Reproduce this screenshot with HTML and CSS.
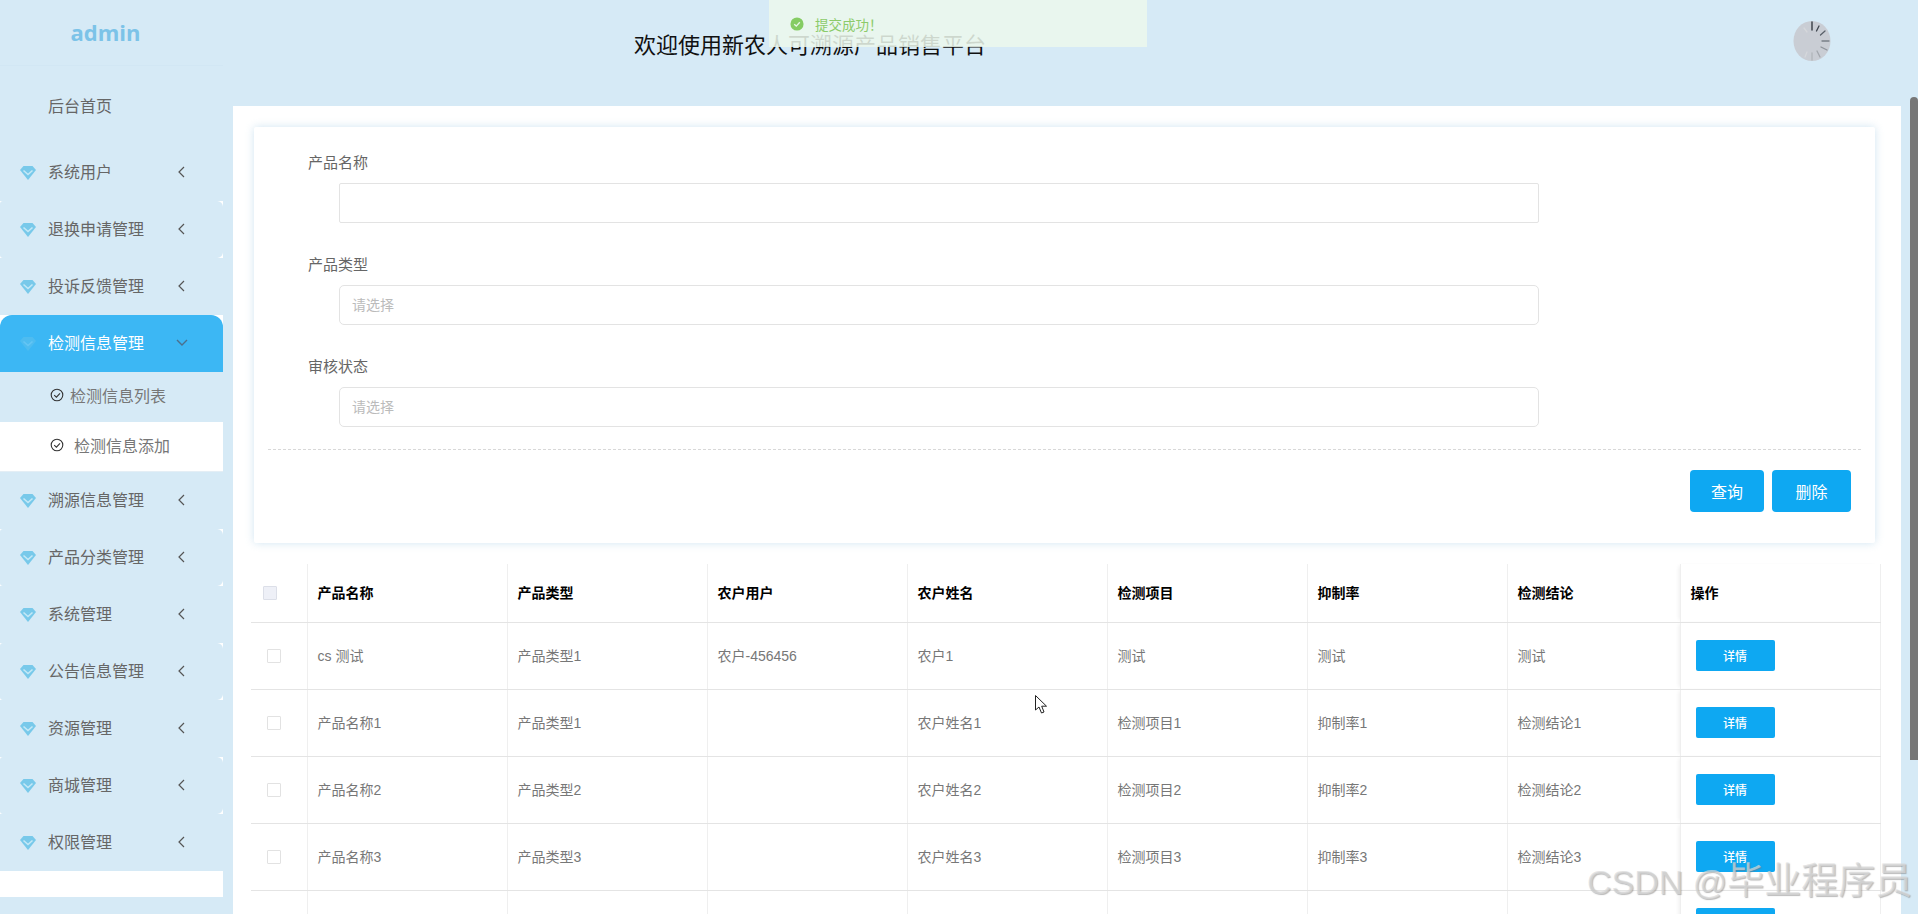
FILE: index.html
```html
<!DOCTYPE html>
<html lang="zh-CN">
<head>
    <meta charset="UTF-8">
    <title>新农人可溯源产品销售平台</title>
    <link rel="stylesheet" href="styles.css">
</head>
<body>
    <svg class="svg-defs" width="0" height="0">
        <symbol id="gem" viewBox="0 0 16 14">
            <polygon points="3.5,0 12.5,0 16,4 8,14 0,4" fill="#78c9ea"/>
            <polyline points="3.5,4.5 8,8.5 12.5,4.5" fill="none" stroke="#c4e8f6" stroke-width="1.6"/>
        </symbol>
        <symbol id="chev" viewBox="0 0 7 12">
            <polyline points="6,1 1,6 6,11" fill="none" stroke="currentColor" stroke-width="1.2"/>
        </symbol>
        <symbol id="check" viewBox="0 0 14 14">
            <circle cx="7" cy="7" r="5.8" fill="none" stroke="currentColor" stroke-width="1.1"/>
            <polyline points="4.2,7.2 6.4,9.2 10,5.4" fill="none" stroke="currentColor" stroke-width="1.1"/>
        </symbol>
    </svg>

    <div class="page">
        <aside class="sidebar">
            <div class="logo">admin</div>
            <div class="home-link">后台首页</div>
            <ul class="menu">
                <li class="menu-item"><svg class="gem"><use href="#gem"/></svg><span>系统用户</span><svg class="chev"><use href="#chev"/></svg></li>
                <li class="menu-item notched"><svg class="gem"><use href="#gem"/></svg><span>退换申请管理</span><svg class="chev"><use href="#chev"/></svg></li>
                <li class="menu-item"><svg class="gem"><use href="#gem"/></svg><span>投诉反馈管理</span><svg class="chev"><use href="#chev"/></svg></li>
                <li class="menu-item active"><svg class="gem"><use href="#gem"/></svg><span>检测信息管理</span>
                    <svg class="chev-down" viewBox="0 0 12 7"><polyline points="1,1 6,6 11,1" fill="none" stroke="currentColor" stroke-width="1.4"/></svg></li>
                <li class="sub-item"><svg class="check"><use href="#check"/></svg><span>检测信息列表</span></li>
                <li class="sub-item current"><svg class="check"><use href="#check"/></svg><span>检测信息添加</span></li>
                <li class="menu-item"><svg class="gem"><use href="#gem"/></svg><span>溯源信息管理</span><svg class="chev"><use href="#chev"/></svg></li>
                <li class="menu-item notched"><svg class="gem"><use href="#gem"/></svg><span>产品分类管理</span><svg class="chev"><use href="#chev"/></svg></li>
                <li class="menu-item"><svg class="gem"><use href="#gem"/></svg><span>系统管理</span><svg class="chev"><use href="#chev"/></svg></li>
                <li class="menu-item notched"><svg class="gem"><use href="#gem"/></svg><span>公告信息管理</span><svg class="chev"><use href="#chev"/></svg></li>
                <li class="menu-item"><svg class="gem"><use href="#gem"/></svg><span>资源管理</span><svg class="chev"><use href="#chev"/></svg></li>
                <li class="menu-item notched"><svg class="gem"><use href="#gem"/></svg><span>商城管理</span><svg class="chev"><use href="#chev"/></svg></li>
                <li class="menu-item"><svg class="gem"><use href="#gem"/></svg><span>权限管理</span><svg class="chev"><use href="#chev"/></svg></li>
            </ul>
        </aside>

        <div class="main">
            <header class="topbar">
                <h1 class="site-title">欢迎使用新农人可溯源产品销售平台</h1>
                <svg class="avatar" viewBox="0 0 38 40">
                    <ellipse cx="19" cy="20" rx="18.5" ry="20" fill="#c9cdd4"/>
                    <g stroke-width="1.3" stroke-linecap="round">
                        <line x1="19" y1="1" x2="19" y2="9" stroke="#2b3038"/>
                        <line x1="26" y1="5" x2="23.5" y2="10" stroke="#3f454e"/>
                        <line x1="32" y1="10" x2="27.5" y2="14" stroke="#596069"/>
                        <line x1="36" y1="20" x2="29" y2="20" stroke="#7a8088"/>
                        <line x1="34" y1="29" x2="28" y2="26" stroke="#8e939a"/>
                        <line x1="27" y1="36" x2="24" y2="30" stroke="#a3a7ad"/>
                        <line x1="19" y1="39" x2="19" y2="32" stroke="#b1b5ba"/>
                        <line x1="12" y1="36" x2="14" y2="31" stroke="#d5d7db"/>
                        <line x1="11" y1="7" x2="14" y2="11" stroke="#d5d7db"/>
                    </g>
                </svg>
            </header>

            <section class="panel">
                <form class="search-card">
                    <div class="field">
                        <label>产品名称</label>
                        <input class="text-input square" type="text">
                    </div>
                    <div class="field">
                        <label>产品类型</label>
                        <input class="text-input" type="text" placeholder="请选择">
                    </div>
                    <div class="field">
                        <label>审核状态</label>
                        <input class="text-input" type="text" placeholder="请选择">
                    </div>
                    <div class="divider"></div>
                    <div class="actions">
                        <button type="button" class="btn btn-query">查询</button>
                        <button type="button" class="btn btn-delete">删除</button>
                    </div>
                </form>

                <table class="data-table">
                    <colgroup>
                        <col class="col-check"><col class="col-wide"><col class="col-wide"><col class="col-wide"><col class="col-wide"><col class="col-wide"><col class="col-wide"><col class="col-short"><col class="col-ops">
                    </colgroup>
                    <thead>
                        <tr>
                            <th class="check-cell"><span class="box box-head"></span></th>
                            <th>产品名称</th><th>产品类型</th><th>农户用户</th><th>农户姓名</th><th>检测项目</th><th>抑制率</th><th>检测结论</th><th class="ops">操作</th>
                        </tr>
                    </thead>
                    <tbody>
                        <tr>
                            <td class="check-cell"><span class="box"></span></td>
                            <td>cs 测试</td><td>产品类型1</td><td>农户-456456</td><td>农户1</td><td>测试</td><td>测试</td><td>测试</td>
                            <td class="ops"><button type="button" class="btn-detail">详情</button></td>
                        </tr>
                        <tr>
                            <td class="check-cell"><span class="box"></span></td>
                            <td>产品名称1</td><td>产品类型1</td><td></td><td>农户姓名1</td><td>检测项目1</td><td>抑制率1</td><td>检测结论1</td>
                            <td class="ops"><button type="button" class="btn-detail">详情</button></td>
                        </tr>
                        <tr>
                            <td class="check-cell"><span class="box"></span></td>
                            <td>产品名称2</td><td>产品类型2</td><td></td><td>农户姓名2</td><td>检测项目2</td><td>抑制率2</td><td>检测结论2</td>
                            <td class="ops"><button type="button" class="btn-detail">详情</button></td>
                        </tr>
                        <tr>
                            <td class="check-cell"><span class="box"></span></td>
                            <td>产品名称3</td><td>产品类型3</td><td></td><td>农户姓名3</td><td>检测项目3</td><td>抑制率3</td><td>检测结论3</td>
                            <td class="ops"><button type="button" class="btn-detail">详情</button></td>
                        </tr>
                        <!-- last row runs off the window, only its lines and button top show -->
                        <tr>
                            <td class="check-cell"></td>
                            <td></td><td></td><td></td><td></td><td></td><td></td><td></td>
                            <td class="ops"><button type="button" class="btn-detail"></button></td>
                        </tr>
                    </tbody>
                </table>
            </section>
        </div>
    </div>

    <!-- things lying over the page -->
    <div class="toast">
        <svg class="toast-icon" viewBox="0 0 16 16">
            <circle cx="8" cy="8" r="7.5" fill="#85cc63"/>
            <polyline points="4.8,8.2 7.2,10.4 11.2,6" fill="none" stroke="#e8f6e8" stroke-width="1.5"/>
        </svg>
        <span>提交成功！</span>
    </div>
    <div class="scroll-thumb"></div>
    <svg class="cursor" viewBox="0 0 13 19">
        <polygon points="0.5,0.5 0.5,15 4,12 6.5,18 9,17 6.7,11.2 11.5,11.2" fill="#fff" stroke="#222" stroke-width="1"/>
    </svg>
    <div class="watermark">CSDN @<span class="watermark-cjk">毕业程序员</span></div>
</body>
</html>
```

FILE: styles.css
```css
* {
    box-sizing: border-box;
}
html, body {
    margin: 0;
    height: 100%;
    overflow: hidden;
}
body {
    font-family: "Liberation Sans", "Noto Sans CJK SC", sans-serif;
    background-color: #d6eaf6;
    color: #666;
}
.svg-defs {
    position: absolute;
}
.page {
    display: flex;
    height: 914px;
}

/* sidebar */
.sidebar {
    width: 223px;
    flex-shrink: 0;
}
.logo {
    height: 66px;
    line-height: 64px;
    text-align: center;
    padding-right: 12px;
    font-family: "Open Sans", sans-serif;
    font-size: 22px;
    font-weight: 700;
    color: #7cc3e8;
    border-bottom: 1px solid #d2e7f4;
}
.home-link {
    height: 58px;
    line-height: 58px;
    margin: 12px 0 8px;
    padding-left: 48px;
    font-size: 16px;
    color: #666;
}
.menu {
    list-style: none;
    margin: 0;
    padding: 0 0 26px;
    background-color: #fff;
    font-size: 16px;
}
.menu-item {
    display: flex;
    align-items: center;
    height: 57px;
    padding-left: 20px;
    background-color: #d6eaf6;
    color: #666;
}
.menu-item span,
.sub-item span {
    margin-top: -4px;
}
.menu-item.notched {
    border-radius: 3px 6px 6px 3px;
}
.menu-item.active {
    background-color: #3cb7f4;
    border-radius: 12px 12px 0 0;
    color: #fff;
}
.menu-item.active .gem {
    opacity: 0.3;
}
.gem {
    width: 16px;
    height: 14px;
    margin-right: 12px;
}
.chev {
    width: 7px;
    height: 12px;
    margin: -2px 38px 0 auto;
    color: #555;
}
.chev-down {
    width: 12px;
    height: 7px;
    margin: -2px 35px 0 auto;
    color: #4c6f8c;
}
.sub-item {
    display: flex;
    align-items: center;
    height: 50px;
    padding-left: 50px;
    background-color: #d6eaf6;
    color: #777;
}
.sub-item.current {
    background-color: #fff;
    border-bottom: 1px solid #e4eef5;
}
.sub-item.current span {
    margin-left: 4px;
}
.check {
    width: 14px;
    height: 14px;
    margin-right: 6px;
    margin-top: -4px;
    color: #333;
}

/* top bar */
.main {
    flex: 1;
    margin: 0 17px 0 10px;
    min-width: 0;
}
.topbar {
    display: flex;
    align-items: flex-start;
    height: 106px;
    padding-left: 401px;
}
.site-title {
    margin: 31px 0 0;
    font-size: 22px;
    line-height: 30px;
    font-weight: 400;
    color: #111;
}
.avatar {
    width: 38px;
    height: 40px;
    margin: 21px 70px 0 auto;
}

/* content */
.panel {
    height: 808px;
    padding: 21px 0 0 21px;
    background-color: #fff;
}
.search-card {
    width: 1621px;
    height: 416px;
    padding-top: 26px;
    background-color: #fff;
    border-radius: 2px;
    box-shadow: 0 0 8px rgba(150, 195, 225, 0.45);
}
.field {
    margin-bottom: 32px;
}
.field label {
    display: block;
    height: 20px;
    line-height: 20px;
    margin: 0 0 10px 54px;
    font-size: 15px;
    color: #666;
}
.text-input {
    display: block;
    width: 1200px;
    height: 40px;
    margin-left: 85px;
    padding: 0 12px;
    border: 1px solid #e3e3e3;
    border-radius: 5px;
    font-family: inherit;
    font-size: 14px;
    background-color: #fff;
}
.text-input.square {
    border-radius: 2px;
}
.text-input::placeholder {
    color: #bbb;
}
.divider {
    margin: -10px 14px 0;
    border-top: 1px dashed #d8d8d8;
}
.actions {
    display: flex;
    justify-content: flex-end;
    gap: 8px;
    padding: 20px 24px 0 0;
}
.btn {
    height: 42px;
    border: none;
    border-radius: 4px;
    background-color: #0ea8f2;
    color: #fff;
    font-family: inherit;
    font-size: 16px;
}
.btn-query {
    width: 74px;
}
.btn-delete {
    width: 79px;
}

/* table */
.data-table {
    width: 1629px;
    margin: 21px 0 0 -3px;
    border-collapse: collapse;
    table-layout: fixed;
    font-size: 14px;
}
.col-check {
    width: 56px;
}
.col-wide {
    width: 200px;
}
.col-short {
    width: 173px;
}
.col-ops {
    width: 200px;
}
.data-table th,
.data-table td {
    padding: 0 0 2px 10px;
    text-align: left;
    border-bottom: 1px solid #e4e4e4;
    border-left: 1px solid #efefef;
}
.data-table th {
    height: 58px;
    color: #000;
    font-size: 14px;
    font-weight: 700;
}
.data-table td {
    height: 67px;
    color: #777;
}
.data-table .check-cell {
    border-left: none;
    padding: 0;
}
.data-table .ops {
    border-right: 1px solid #efefef;
    box-shadow: -3px 0 4px -2px rgba(0, 0, 0, 0.07);
}
.data-table td.ops {
    padding: 0 0 0 15px;
}
.box {
    display: block;
    width: 14px;
    height: 14px;
    margin-left: 16px;
    border: 1px solid #e2e2e2;
    border-radius: 1px;
    background-color: #fff;
}
.box-head {
    margin-left: 12px;
    background-color: #eef0f7;
    border-color: #dcdfe8;
}
.btn-detail {
    display: block;
    width: 79px;
    height: 31px;
    border: none;
    border-radius: 2px;
    background-color: #0ea8f2;
    color: #fff;
    font-family: inherit;
    font-size: 12px;
    font-weight: 500;
}

/* overlays */
.toast {
    position: absolute;
    left: 769px;
    top: 0;
    display: flex;
    align-items: center;
    width: 378px;
    height: 47px;
    padding-left: 21px;
    background-color: rgba(236, 248, 236, 0.86);
    color: #8ccb6a;
    font-size: 13.5px;
}
.toast-icon {
    width: 14px;
    height: 14px;
    margin-right: 11px;
}
.scroll-thumb {
    position: absolute;
    left: 1910px;
    top: 97px;
    width: 8px;
    height: 663px;
    background-color: #777;
    border-radius: 4px 4px 0 0;
}
.cursor {
    position: absolute;
    left: 1035px;
    top: 695px;
    width: 13px;
    height: 19px;
}
.watermark {
    position: absolute;
    left: 1587px;
    top: 859px;
    white-space: nowrap;
    font-size: 34px;
    line-height: 46px;
    color: rgba(218, 218, 218, 0.7);
    text-shadow: 1px 1px 1px rgba(120, 120, 120, 0.5);
}
.watermark-cjk {
    font-size: 37px;
}
```
